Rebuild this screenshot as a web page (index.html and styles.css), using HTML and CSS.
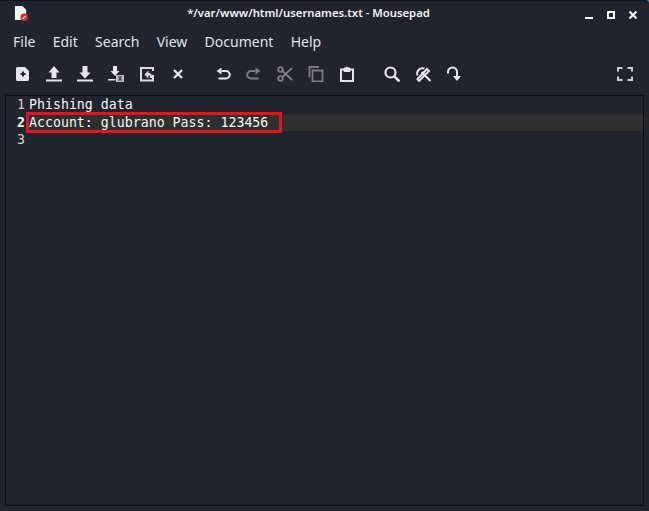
FILE: index.html
```html
<!doctype html>
<html lang="en-us">

<head>
    <meta charset="utf-8">
    <title>*/var/www/html/usernames.txt - Mousepad</title>
    <link rel="stylesheet" href="styles.css">
</head>

<body>
    <div class="window">
        <div class="titlebar">
            <svg class="app-icon" viewBox="0 0 16 16">
                <path d="M1 0h8l4 4v11H1z" fill="#f2f2f2"/>
                <circle cx="11" cy="12" r="4" fill="#d3232a"/>
                <path d="M9 14l3.500-3.500" stroke="#fff" stroke-width="1.300"/>
            </svg>
            <div class="title">*/var/www/html/usernames.txt - Mousepad</div>
            <div class="win-buttons">
                <svg width="8" height="8" viewBox="0 0 8 8"><path d="M0 6h8v2H0z" fill="#fff"/></svg>
                <svg width="8" height="8" viewBox="0 0 8 8"><path d="M0 0h8v8H0zM2 2v4h4V2z" fill="#fff" fill-rule="evenodd"/></svg>
                <svg width="8" height="8" viewBox="0 0 8 8"><path d="M.5.500l7 7M7.500.500l-7 7" stroke="#fff" stroke-width="2"/></svg>
            </div>
        </div>

        <div class="menubar">
            <span>File</span>
            <span>Edit</span>
            <span>Search</span>
            <span>View</span>
            <span>Document</span>
            <span>Help</span>
        </div>

        <div class="toolbar">
            <svg class="tool" viewBox="0 0 16 16"><path d="M2.500 1H10l4 4v8.500a1.500 1.500 0 0 1-1.500 1.500h-10A1.500 1.500 0 0 1 1 13.500v-11A1.500 1.500 0 0 1 2.500 1zM7 5.500V7H5.500v2H7v1.500h2V9h1.500V7H9V5.500z" fill="#e6e6e6" fill-rule="evenodd"/></svg>
            <svg class="tool" viewBox="0 0 16 16"><path d="M8 0l5.500 6.500H10.500V12h-5V6.500H2.500zM0 13.500h16V15.500H0z" fill="#e6e6e6"/></svg>
            <svg class="tool" viewBox="0 0 16 16"><path d="M5.500 0h5v6.500h3L8 12.500 2.500 6.500h3zM0 13.500h16V15.500H0z" fill="#e6e6e6"/></svg>
            <svg class="tool" viewBox="0 0 16 16"><path d="M5 0h4v5h2.500L7 10 2.500 5H5zM0 13h7.500v1.500H0z" fill="#e6e6e6"/><path d="M8 9h8v7H8z" fill="#bdbdbd"/><path d="M10 10.500h4v1h-1.300v2H14v1h-4v-1h1.300v-2H10z" fill="#333"/></svg>
            <svg class="tool" viewBox="0 0 16 16"><path d="M14 5V2H2v12.500h12V9" fill="none" stroke="#dcdcdc" stroke-width="2"/><path d="M5.500 8.500l4-4v2.500a3.500 3.500 0 0 1 3.500 3.500v1.500h-2v-1.500a1.500 1.500 0 0 0-1.500-1.500V12.500z" fill="#dcdcdc"/></svg>
            <svg class="tool" viewBox="0 0 16 16"><path d="M4 4l8 8M12 4l-8 8" stroke="#e6e6e6" stroke-width="2.400"/></svg>
            <i class="sep"></i>
            <svg class="tool" viewBox="0 0 16 16"><path d="M6.500 5h4.500a3.500 3.500 0 0 1 0 7.500H3.500" fill="none" stroke="#e6e6e6" stroke-width="2"/><path d="M6.500 1.500v7L1.500 5z" fill="#e6e6e6"/></svg>
            <svg class="tool" viewBox="0 0 16 16"><path d="M9.500 5H5a3.500 3.500 0 0 0 0 7.500h7.500" fill="none" stroke="#7d7d7d" stroke-width="2"/><path d="M9.500 1.500v7l5-3.500z" fill="#7d7d7d"/></svg>
            <svg class="tool" viewBox="0 0 16 16"><g fill="none" stroke="#7d7d7d" stroke-width="1.800"><circle cx="3.500" cy="3.500" r="2.300"/><circle cx="3.500" cy="12.500" r="2.300"/><path d="M5.500 5L15 14M5.500 11L15 2"/></g></svg>
            <svg class="tool" viewBox="0 0 16 16"><g fill="none" stroke="#7d7d7d" stroke-width="1.800"><path d="M1.500 11.500V1H11"/><path d="M4.500 4.500h10v11h-10z"/></g></svg>
            <svg class="tool" viewBox="0 0 16 16"><path d="M2 3.500h12v11.500H2z" fill="none" stroke="#e6e6e6" stroke-width="2"/><path d="M5 2h2a1 1 0 0 1 2 0h2v3.500H5z" fill="#e6e6e6" stroke="#e6e6e6"/></svg>
            <i class="sep"></i>
            <svg class="tool" viewBox="0 0 16 16"><circle cx="6.500" cy="6.500" r="5" fill="none" stroke="#e6e6e6" stroke-width="2.200"/><path d="M10 10l5.500 5.500" stroke="#e6e6e6" stroke-width="2.600"/></svg>
            <svg class="tool" viewBox="0 0 16 16"><path d="M9.500 2.500A5.500 5.500 0 0 0 2.500 9.500" fill="none" stroke="#e6e6e6" stroke-width="2"/><path d="M2.500 13L12 3l2 2L4 15zM6.500 6l9 9" stroke="#e6e6e6" stroke-width="2" fill="none"/></svg>
            <svg class="tool" viewBox="0 0 16 16"><path d="M2 7.500V6a4.500 4.500 0 0 1 9 0v5" fill="none" stroke="#e6e6e6" stroke-width="2"/><path d="M7 10h8l-4 5z" fill="#e6e6e6"/></svg>
            <svg class="tool fullscreen" viewBox="0 0 16 16"><path d="M5.500 2h-4.500v3.500M10.500 2h4.500v3.500M5.500 14h-4.500v-3.500M10.500 14h4.500v-3.500" fill="none" stroke="#d0d0d0" stroke-width="2"/></svg>
        </div>

        <div class="editor">
            <div class="line">
                <span class="num">1</span><span class="text">Phishing data</span>
            </div>
            <div class="line current">
                <span class="num">2</span><span class="text">Account: glubrano Pass: 123456</span>
            </div>
            <div class="line">
                <span class="num">3</span><span class="text"></span>
            </div>
        </div>
    </div>
</body>

</html>
```

FILE: styles.css
```css
html {
    background: #1d8fc9;
}

body {
    margin: 0;
    height: 511px;
    overflow: hidden;
    font-family: "Noto Sans", sans-serif;
}

.window {
    height: 511px;
    box-sizing: border-box;
    display: flex;
    flex-direction: column;
    color: #e8e8e8;
    background: #21242d;
    border-top: 1px solid #14161c;
    border-top-right-radius: 4px;
}

.titlebar {
    height: 26px;
    display: flex;
    align-items: center;
    padding: 0 12px 0 14px;
}

.app-icon {
    width: 15px;
    height: 15px;
    margin-top: -1px;
}

.title {
    flex: 1;
    text-align: center;
    color: #f2f2f2;
    font-size: 11.300px;
    font-weight: 600;
    margin-left: 3px;
    margin-top: -3px;
}

.win-buttons {
    display: flex;
    gap: 14px;
    margin-top: 1px;
}

.menubar {
    height: 28px;
    box-sizing: border-box;
    display: flex;
    gap: 17.300px;
    align-items: center;
    padding: 2px 13px 0;
    font-size: 14px;
    color: #dfe3ea;
    border-bottom: 1px solid #1f2129;
}

.toolbar {
    height: 38px;
    display: flex;
    align-items: center;
    padding: 0 16px 0 15px;
    gap: 15px;
}

.tool {
    width: 16px;
    height: 16px;
    flex: none;
}

.sep {
    width: 1px;
    height: 28px;
    background: #24262f;
    margin: 0 -1px;
}

.fullscreen {
    margin-left: auto;
}

.editor {
    flex: 1;
    margin: 2px 5px 5px 5px;
    border: 1px solid #0e0f14;
    font-family: "DejaVu Sans Mono", monospace;
    font-size: 13.250px;
    color: #f5f5f5;
}

.line {
    height: 17.700px;
    line-height: 17.700px;
    display: flex;
}

.num {
    width: 19px;
    flex: none;
    text-align: right;
    color: #d0d0d0;
}

.text {
    margin-left: 4px;
    position: relative;
}

.current {
    background: linear-gradient(to right, transparent 20px, #2f2f2f 20px);
}

.current .num {
    font-weight: bold;
    color: #fff;
}

/* red marker drawn over the screenshot */
.current .text::after {
    content: "";
    position: absolute;
    left: -3px;
    right: -14px;
    top: -1.700px;
    bottom: -1.600px;
    border: 3px solid #e5131d;
    box-sizing: border-box;
}
```
